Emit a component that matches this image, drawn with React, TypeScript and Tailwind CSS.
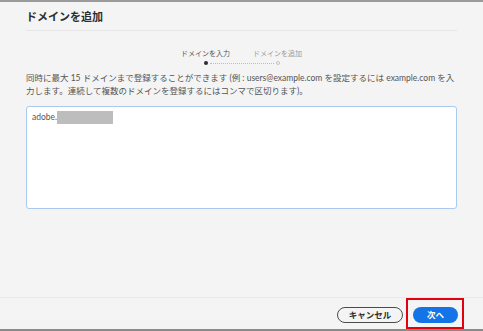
import React from 'react'

const font = { fontFamily: 'Lato, "Noto Sans CJK JP", sans-serif' }

function Stepper() {
  return (
    <div className="mt-[17px] flex flex-col items-center">
      <div className="flex w-[130px] justify-between text-[7px] leading-[10px]">
        <span className="w-[58px] text-center text-[#555]">ドメインを入力</span>
        <span className="w-[58px] text-center text-[#9a9a9a]">ドメインを追加</span>
      </div>
      <div className="mt-[3px] flex w-[76px] items-center">
        <span className="h-[4px] w-[4px] rounded-full bg-[#2c2c2c]" />
        <span className="mx-[2px] flex-1 border-t border-dotted border-[#bdbdbd]" />
        <span className="h-[4px] w-[4px] rounded-full border border-[#c4c4c4]" />
      </div>
    </div>
  )
}

export default function App() {
  return (
    <div
      className="flex h-[331px] w-[483px] flex-col border-y-2 border-t-[#9a9a9a] border-b-[#8a8a8a] bg-[#f4f4f4] text-[#4b4b4b]"
      style={font}
    >
      <div className="flex flex-1 flex-col px-[26px]">
        <div className="border-b border-[#e6e6e6] pb-[6px] pt-[8px]">
          <h1 className="text-[11px] font-bold leading-[14px] text-[#2c2c2c]">ドメインを追加</h1>
        </div>

        <Stepper />

        <p className="mt-[7px] text-[8.5px] leading-[13px] text-[#555]">
          同時に最大 15 ドメインまで登録することができます (例 : users@example.com を設定するには example.com を入
          <br />
          力します。連続して複数のドメインを登録するにはコンマで区切ります)。
        </p>

        <div className="mt-[8px] h-[103px] rounded-[3px] border border-[#a9c9ef] bg-white px-[5px] pt-[4px]">
          <div className="flex items-center text-[8.5px] leading-[13px] text-[#555]">
            <span>adobe.</span>
            <span className="h-[13px] w-[56px] bg-[#bdbdbd]" />
          </div>
        </div>
      </div>

      <div className="flex h-[32px] items-start justify-end gap-[10px] border-t border-[#e9e9e9] pr-[25px] pt-[9px]">
        <button className="flex h-[16px] w-[66px] items-center justify-center rounded-full border-[1.5px] border-[#4b4b4b] text-[8.5px] font-bold text-[#2c2c2c]">
          キャンセル
        </button>
        <div className="relative">
          <button className="flex h-[16px] w-[45px] items-center justify-center rounded-full bg-[#1473e6] text-[8.5px] font-bold text-white">
            次へ
          </button>
          <div className="pointer-events-none absolute -bottom-[6px] -left-[7px] -right-[6px] -top-[9px] border-2 border-[#e3000f]" />
        </div>
      </div>
    </div>
  )
}
